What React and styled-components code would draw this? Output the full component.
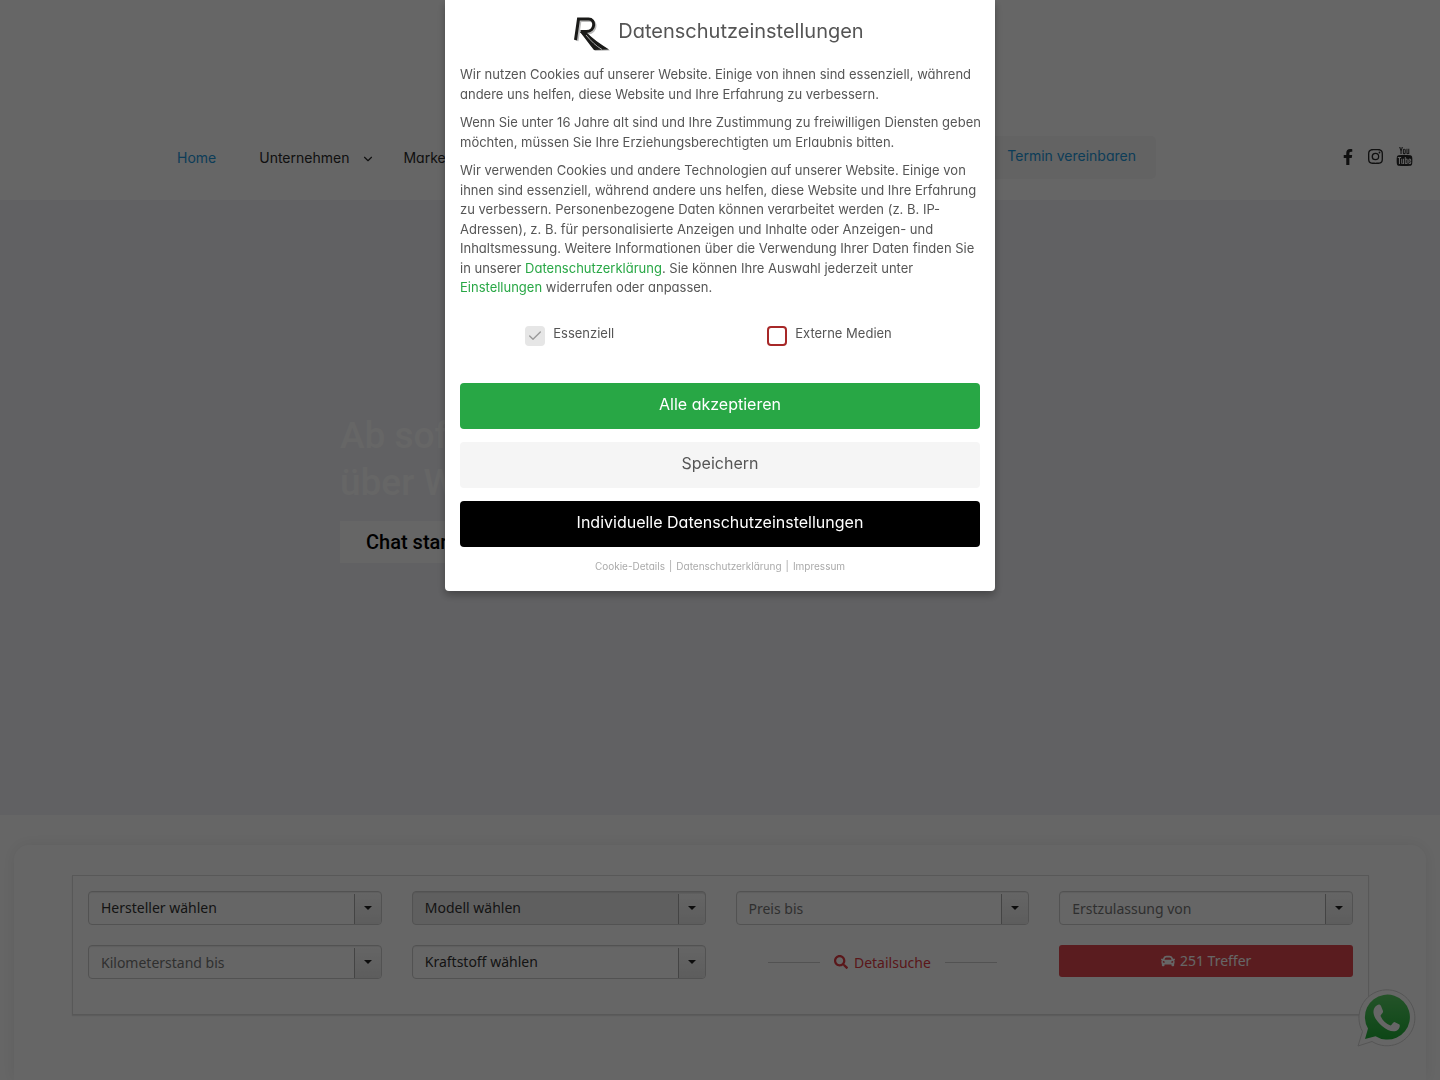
import React from 'react';
import styled, { createGlobalStyle, css } from 'styled-components';
import { FaCar, FaFacebookF, FaSearch } from 'react-icons/fa';
import { FiCheck, FiChevronDown } from 'react-icons/fi';
import { BsInstagram } from 'react-icons/bs';
import { TfiYoutube } from 'react-icons/tfi';

const fields = [
  { id: 'hersteller', label: 'Hersteller wählen', type: 'select' },
  { id: 'modell', label: 'Modell wählen', type: 'select', disabled: true },
  { id: 'preis', label: 'Preis bis', type: 'text' },
  { id: 'erstzulassung', label: 'Erstzulassung von', type: 'text' },
  { id: 'kilometer', label: 'Kilometerstand bis', type: 'text' },
  { id: 'kraftstoff', label: 'Kraftstoff wählen', type: 'select' },
];

const Logo = () => (
  <svg width="38" height="36" viewBox="0 0 38 36" aria-hidden="true">
    <path
      d="M4 25 7 4.500H17C24 4.500 24 16 15 17H9"
      transform="translate(1 1)"
      fill="none"
      stroke="#bbb"
      strokeWidth="3"
    />
    <path
      d="M3.500 25 6.500 4H16.500C24 4 23.500 16 14.500 16.500H8.500"
      fill="none"
      stroke="#1a1a18"
      strokeWidth="3"
    />
    <path d="M9 18 15 18C21 24 29 30 38 35.500L23 36C18 30 14 24 9 18Z" fill="#bbb" />
    <path d="M8 17 14 17C20 23 28 29 37 34.500L22 35C17 29 13 23 8 17Z" fill="#1a1a18" />
    <path d="M14 20C19 26 24 31 30 34.500" fill="none" stroke="#aaa" strokeWidth="1" />
  </svg>
);

const WhatsAppIcon = () => (
  <svg width="60" height="60" viewBox="0 0 60 60" aria-hidden="true">
    <defs>
      <linearGradient id="wa" x1="0" y1="0" x2="0" y2="1">
        <stop offset="0" stopColor="#5bd066" />
        <stop offset="1" stopColor="#20b038" />
      </linearGradient>
    </defs>
    <path
      d="M2 58 6.500 43.500A28 28 0 1 1 16 53.500Z"
      fill="#fff"
      stroke="#d4d4d4"
      strokeWidth="1"
    />
    <path d="M9 51 12 40.500A22.500 22.500 0 1 1 19.500 48.200Z" fill="url(#wa)" />
    <path
      d="M20 18C22 16 24 16 25 18L27 23C27.500 25 25 26 24.500 28C27 33 30 36 34.500 37.500C36 37 37 34 38.500 34L43.500 36.500C44.500 38 43 42 40 43C36 44 31 42.500 26 38C20 33 17 27 17.500 23C17.800 21 18.500 19 20 18Z"
      fill="#fff"
    />
  </svg>
);

const SearchField = ({ id, label, type, disabled }) => (
  <Field $disabled={disabled}>
    {type === 'select' ? (
      <FieldSelect id={id} aria-label={label} disabled={disabled}>
        <option>{label}</option>
      </FieldSelect>
    ) : (
      <FieldInput id={id} aria-label={label} placeholder={label} />
    )}
    <FieldArrow />
  </Field>
);

const CookieDialog = () => (
  <Backdrop>
    <Dialog role="dialog" aria-modal="true" aria-labelledby="cookie-title">
      <DialogHead>
        <Logo />
        <DialogTitle id="cookie-title">Datenschutzeinstellungen</DialogTitle>
      </DialogHead>
      <DialogText>
        Wir nutzen Cookies auf unserer Website. Einige von ihnen sind essenziell, während andere
        uns helfen, diese Website und Ihre Erfahrung zu verbessern.
      </DialogText>
      <DialogText>
        Wenn Sie unter 16 Jahre alt sind und Ihre Zustimmung zu freiwilligen Diensten geben
        möchten, müssen Sie Ihre Erziehungsberechtigten um Erlaubnis bitten.
      </DialogText>
      <DialogText>
        Wir verwenden Cookies und andere Technologien auf unserer Website. Einige von ihnen sind
        essenziell, während andere uns helfen, diese Website und Ihre Erfahrung zu verbessern.
        Personenbezogene Daten können verarbeitet werden (z. B. IP-Adressen), z. B. für
        personalisierte Anzeigen und Inhalte oder Anzeigen- und Inhaltsmessung. Weitere
        Informationen über die Verwendung Ihrer Daten finden Sie in unserer{' '}
        <GreenLink href="#datenschutz">Datenschutzerklärung</GreenLink>. Sie können Ihre Auswahl
        jederzeit unter <GreenLink href="#einstellungen">Einstellungen</GreenLink> widerrufen oder
        anpassen.
      </DialogText>
      <Choices>
        <Choice>
          <CheckBox>
            <CheckInput type="checkbox" defaultChecked disabled />
            <FiCheck />
          </CheckBox>
          Essenziell
        </Choice>
        <Choice>
          <CheckBox>
            <CheckInput type="checkbox" />
          </CheckBox>
          Externe Medien
        </Choice>
      </Choices>
      <Buttons>
        <DialogButton $bg="#28a745" $color="#fff">Alle akzeptieren</DialogButton>
        <DialogButton $bg="#f5f5f5" $color="#555">Speichern</DialogButton>
        <DialogButton $bg="#000" $color="#fff">Individuelle Datenschutzeinstellungen</DialogButton>
      </Buttons>
      <DialogLinks>
        <a href="#details">Cookie-Details</a>
        <span>|</span>
        <a href="#datenschutz">Datenschutzerklärung</a>
        <span>|</span>
        <a href="#impressum">Impressum</a>
      </DialogLinks>
    </Dialog>
  </Backdrop>
);

const App = () => (
  <>
    <GlobalStyle />
    <Page>
      <Header>
        <Nav>
          <NavLink href="#home" $active>Home</NavLink>
          <NavLink href="#unternehmen">
            Unternehmen <FiChevronDown />
          </NavLink>
          <NavLink href="#marken">Marken</NavLink>
        </Nav>
        <Appointment href="#termin">Termin vereinbaren</Appointment>
        <Socials>
          <a href="#facebook" aria-label="Facebook"><FaFacebookF size={16} /></a>
          <a href="#instagram" aria-label="Instagram"><BsInstagram size={15} /></a>
          <a href="#youtube" aria-label="YouTube"><TfiYoutube size={19} /></a>
        </Socials>
      </Header>
      <Hero>
        <HeroTitle>
          Ab sofort
          <br />
          über WhatsApp
        </HeroTitle>
        <ChatLink href="#chat">Chat starten</ChatLink>
      </Hero>
      <SearchCard>
        <SearchForm>
          {fields.map((f) => (
            <SearchField key={f.id} {...f} />
          ))}
          <DetailLink href="#detailsuche">
            <FaSearch />
            Detailsuche
          </DetailLink>
          <SubmitButton type="button">
            <FaCar />
            251 Treffer
          </SubmitButton>
        </SearchForm>
      </SearchCard>
    </Page>
    <ChatBubble href="#whatsapp" aria-label="WhatsApp">
      <WhatsAppIcon />
    </ChatBubble>
    <CookieDialog />
  </>
);

const GlobalStyle = createGlobalStyle`
  * {
    box-sizing: border-box;
  }
  body {
    margin: 0;
    font-family: Inter, "Liberation Sans", sans-serif;
    font-feature-settings: "cv11";
    background: #fff;
  }
  a {
    color: inherit;
    text-decoration: none;
  }
  button, input, select {
    font: inherit;
    font-feature-settings: inherit;
  }
`;

const Page = styled.div`
  display: flex;
  flex-direction: column;
  min-height: 100vh;
  overflow: hidden;
`;

const Header = styled.header`
  display: flex;
  align-items: center;
  padding: 136px 26px 21px 177px;
`;

const Nav = styled.nav`
  display: flex;
  gap: 43px;
  flex: 1;
`;

const NavLink = styled.a`
  display: flex;
  align-items: center;
  font-size: 14px;
  line-height: 20px;
  color: ${(p) => (p.$active ? '#1e98dc' : '#2a2a2a')};

  svg {
    margin: 2px -15px 0 12px;
  }
`;

const Appointment = styled.a`
  padding: 10px 20px 13px;
  border-radius: 5px;
  background: #f7f7f7;
  color: #1e98dc;
  font-size: 14px;
  line-height: 20px;
`;

const Socials = styled.div`
  display: flex;
  align-items: center;
  gap: 12px;
  margin-left: 184px;
  padding-bottom: 2px;
  color: #2a2a2a;

  a {
    display: flex;
  }
`;

const Hero = styled.section`
  display: flex;
  flex-direction: column;
  align-items: flex-start;
  height: 615px;
  padding: 212px 340px 0;
  background: #f2f2f7;
  font-family: Roboto, sans-serif;
  font-weight: 500;
`;

const HeroTitle = styled.h1`
  margin: 0 0 15px;
  font-size: 37px;
  font-weight: 500;
  line-height: 47px;
  color: #fff;
`;

const ChatLink = styled.a`
  padding: 9px 26px;
  background: #fff;
  color: #000;
  font-size: 20px;
  line-height: 24px;
`;

const SearchCard = styled.main`
  flex: 1;
  margin: 30px 14px 0;
  padding: 30px 57px 65px 58px;
  border-radius: 15px 15px 0 0;
  box-shadow: 0 0 15px rgba(0, 0, 0, 0.08);
  font-family: "Noto Sans", "Open Sans", sans-serif;
  font-size: 14px;
`;

const SearchForm = styled.form`
  display: grid;
  grid-template-columns: repeat(4, 1fr);
  gap: 20px 30px;
  padding: 15px 15px 35px;
  border: 1px solid #ddd;
  box-shadow: 0 1px 1px rgba(0, 0, 0, 0.1);
`;

const Field = styled.div`
  display: flex;
  height: 34px;
  border: 1px solid #ccc;
  border-radius: 4px;
  background: ${(p) => (p.$disabled ? '#eee' : '#fff')};
  box-shadow: inset 0 1px 1px rgba(0, 0, 0, 0.08);
`;

const control = css`
  flex: 1;
  min-width: 0;
  border: 0;
  background: none;
  outline: none;
  color: #333;
`;

const FieldSelect = styled.select`
  ${control}
  padding: 0 12px 2px;
  appearance: none;
  opacity: 1;
`;

const FieldInput = styled.input`
  ${control}
  padding: 0 12px;

  &::placeholder {
    color: #777;
    opacity: 1;
  }
`;

const FieldArrow = styled.span`
  display: flex;
  align-items: center;
  justify-content: center;
  width: 27px;
  margin-top: 2px;
  padding-bottom: 2px;
  border-left: 1px solid #aaa;
  border-radius: 0 3px 3px 0;
  background: linear-gradient(#fcfcfc, #e8e8e8);
  pointer-events: none;

  &::after {
    content: '';
    border: 4px solid transparent;
    border-top-color: #222;
    border-bottom: 0;
  }
`;

const DetailLink = styled.a`
  display: flex;
  align-items: center;
  height: 34px;
  padding: 0 32px;
  color: #e03a42;

  svg {
    margin-right: 6px;
  }

  &::before, &::after {
    content: '';
    flex: 1;
    height: 1px;
    background: #ccc;
  }

  &::before {
    margin-right: 14px;
  }

  &::after {
    margin-left: 14px;
  }
`;

const SubmitButton = styled.button`
  display: flex;
  align-items: center;
  justify-content: center;
  gap: 5px;
  height: 32px;
  padding-bottom: 2px;
  border: 0;
  border-radius: 3px;
  background: #e0484e;
  color: #fff;
`;

const ChatBubble = styled.a`
  position: fixed;
  right: 24px;
  bottom: 32px;
  display: flex;
`;

const Backdrop = styled.div`
  position: fixed;
  inset: 0;
  display: flex;
  align-items: flex-start;
  justify-content: center;
  background: rgba(0, 0, 0, 0.6);
`;

const Dialog = styled.section`
  width: 100%;
  max-width: 550px;
  padding: 13px 15px 17px;
  border-radius: 0 0 4px 4px;
  background: #fff;
  box-shadow: 0 4px 8px rgba(0, 0, 0, 0.3);
  color: #555;
  font-size: 13px;
  line-height: 1.5;
`;

const DialogHead = styled.div`
  display: flex;
  justify-content: center;
  gap: 8px;
  padding: 2px 4px 0 0;
  margin-bottom: 14px;
`;

const DialogTitle = styled.h2`
  margin: 0;
  font-size: 20px;
  font-weight: 400;
  line-height: 32px;
`;

const DialogText = styled.p`
  margin: 0 -5px 9px 0;
`;

const GreenLink = styled.a`
  color: #28a745;
`;

const Choices = styled.div`
  display: flex;
  justify-content: center;
  gap: 153px;
  margin: 26px 0 37px;
  padding-right: 23px;
`;

const Choice = styled.label`
  display: flex;
  gap: 8px;
`;

const CheckBox = styled.span`
  display: grid;
  margin-top: 2px;

  > * {
    grid-area: 1 / 1;
    place-self: center;
  }

  svg {
    color: #999;
    font-size: 16px;
  }
`;

const CheckInput = styled.input`
  appearance: none;
  width: 20px;
  height: 20px;
  margin: 0;
  border: 2px solid #a72828;
  border-radius: 4px;
  background: #fff;

  &:disabled {
    border-color: #e6e6e6;
    background: #e6e6e6;
  }
`;

const Buttons = styled.div`
  display: grid;
  gap: 13px;
`;

const DialogButton = styled.button`
  height: 46px;
  padding: 0 10px 3px;
  border: 0;
  border-radius: 4px;
  background: ${(p) => p.$bg};
  color: ${(p) => p.$color};
  font-size: 16px;
  line-height: 24px;
`;

const DialogLinks = styled.div`
  display: flex;
  justify-content: center;
  gap: 4px;
  margin-top: 12px;
  color: #aaa;
  font-size: 10px;
  line-height: 15px;
`;

export default App;
